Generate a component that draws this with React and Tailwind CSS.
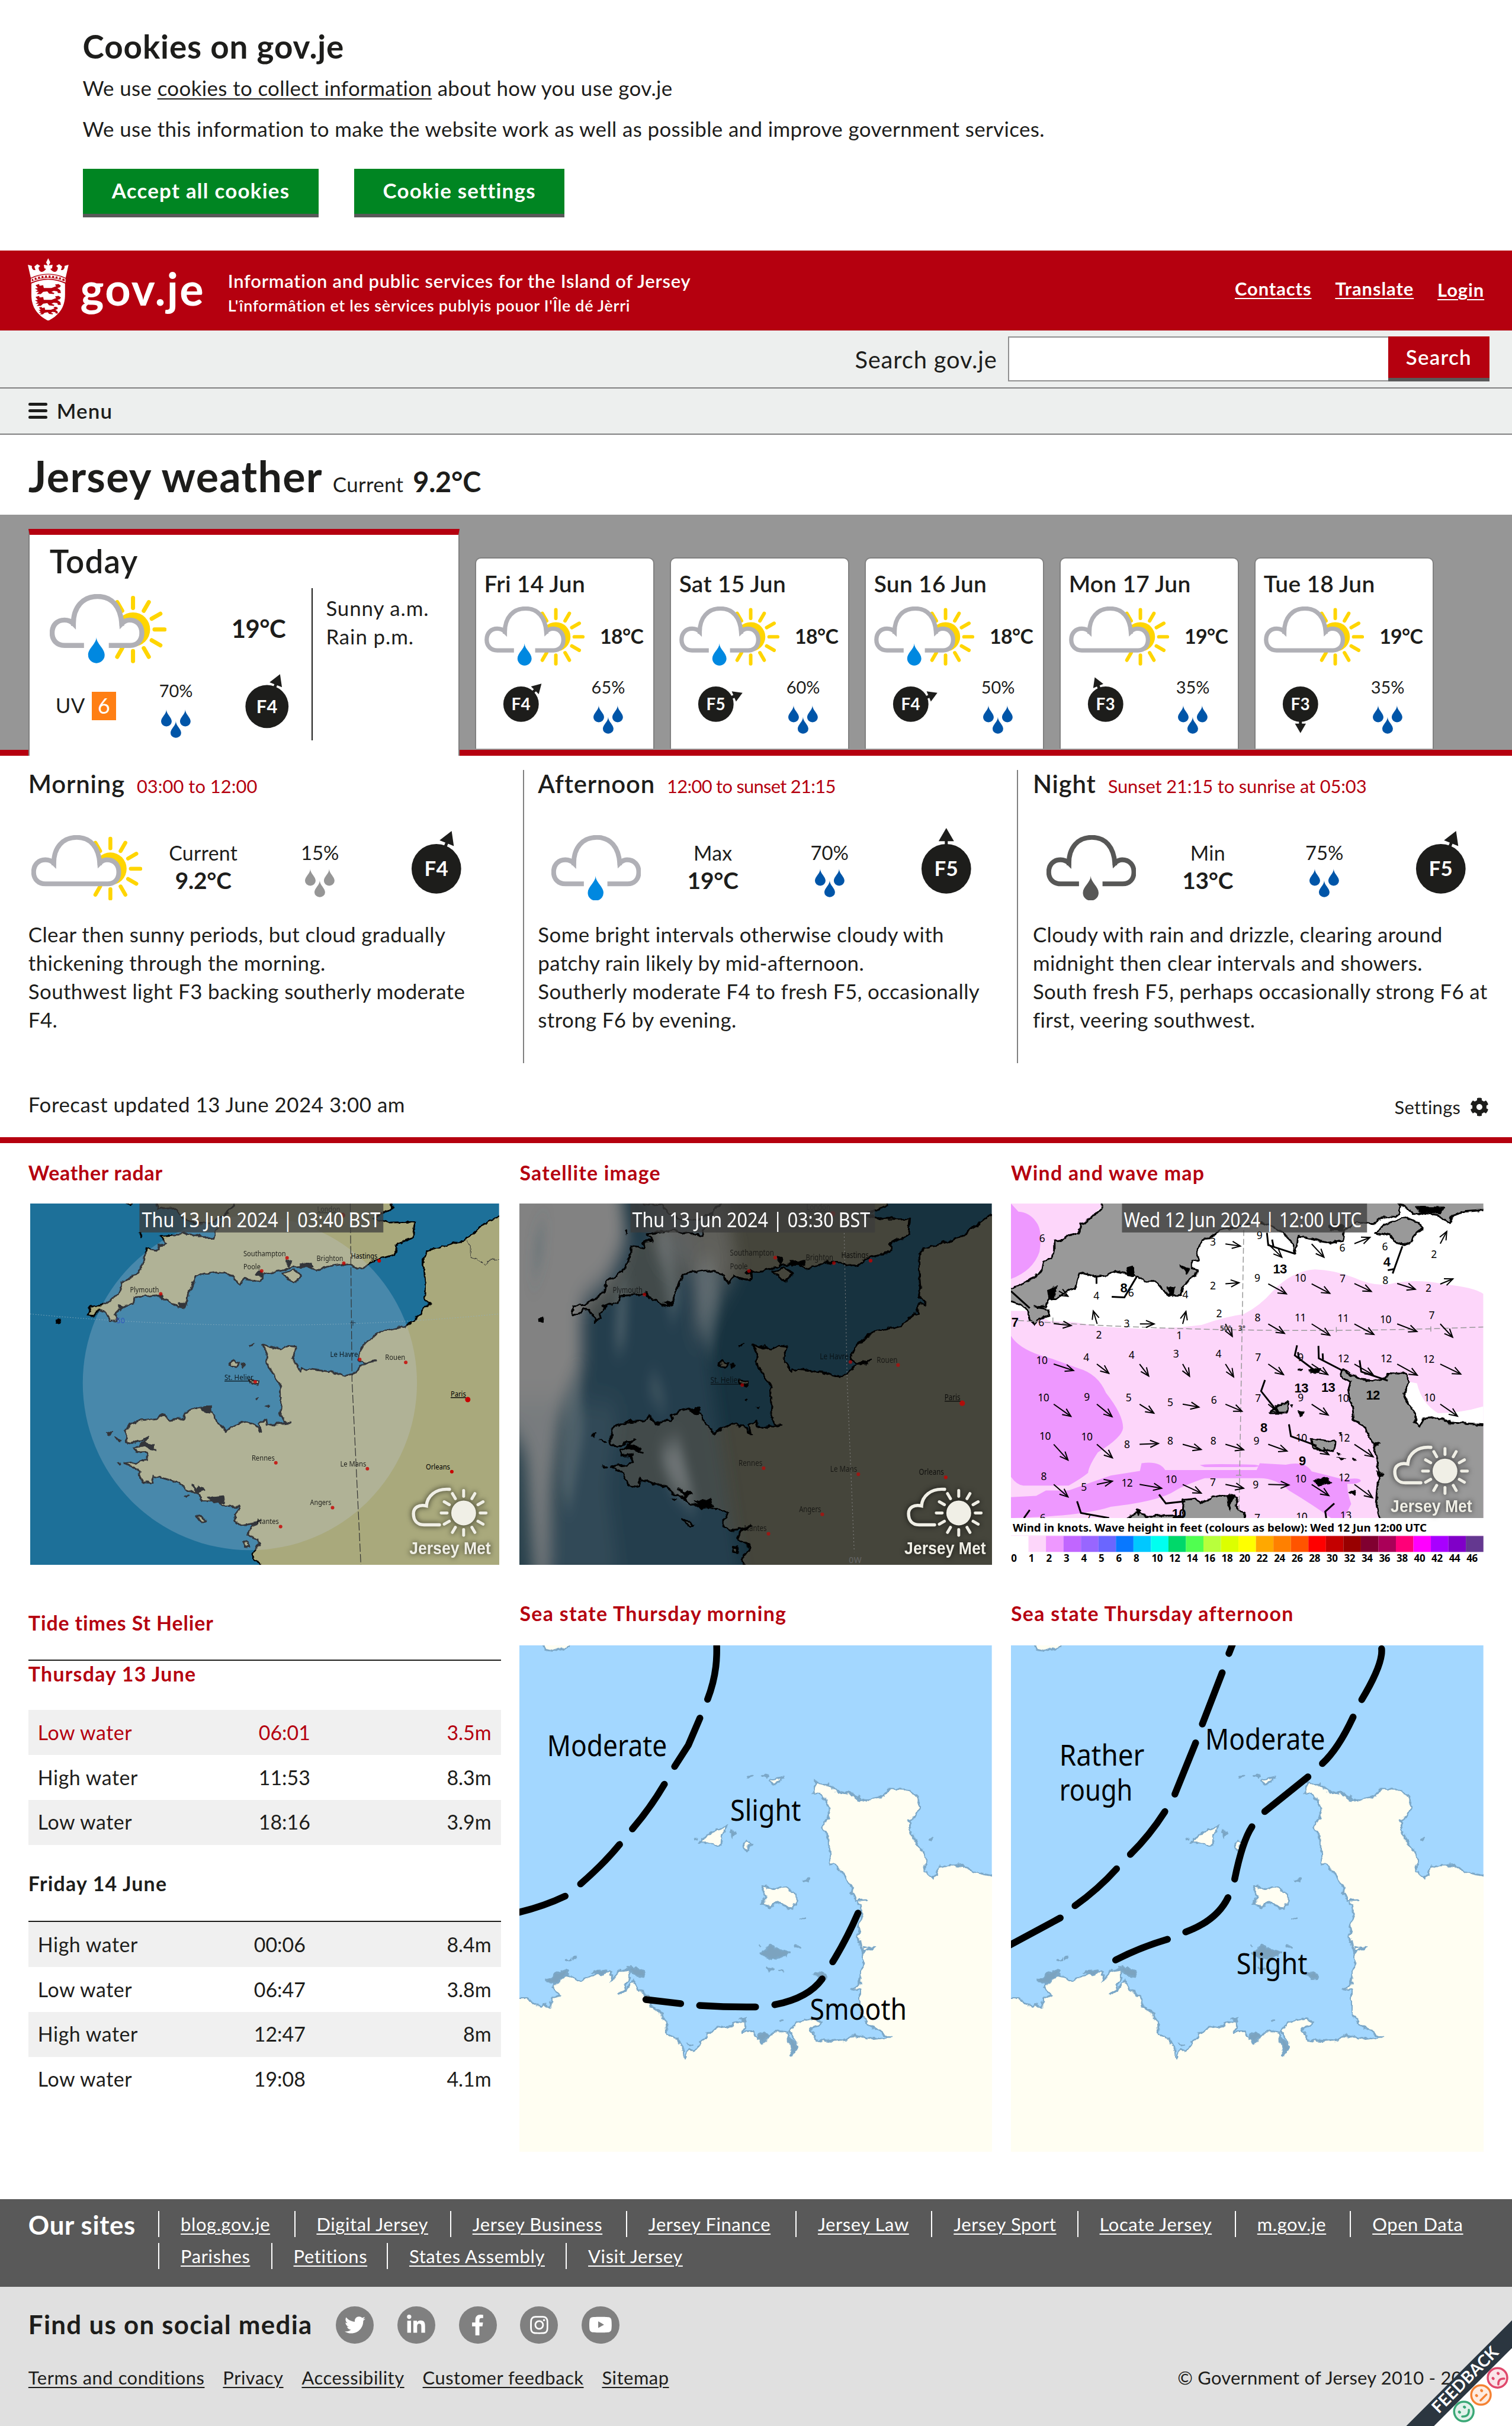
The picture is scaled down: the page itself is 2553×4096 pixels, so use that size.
import React from "react";
import { FaTwitter, FaLinkedinIn, FaFacebookF, FaInstagram, FaYoutube, FaCog } from "react-icons/fa";

const RAYS = [0, 30, 60, 90, 120, 150, 180, 210, 240, 270, 300, 330];
const CLOUD =
  "M25 87C12 87 4 78 4 66C4 52 13 44 25 44C31 44 36 46 40 50C40 22 56 4 81 4C106 4 120 22 122 50C126 46 130 44 135 44C148 44 156 53 156 66C156 79 148 87 136 87Z";

function WeatherIcon({ sun, rain, dark, className }) {
  const grey = dark ? "#575756" : "#b0b0b6";
  return (
    <svg viewBox={sun ? "0 0 198 117" : "0 0 160 117"} className={className} fill="none">
      {sun && (
        <g>
          <circle cx="141" cy="60" r="29" fill="#ffd500" />
          {RAYS.map((a) => (
            <line key={a} x1="141" y1="23.500" x2="141" y2="6.500" stroke="#ffd500" strokeWidth="7" strokeLinecap="round" transform={`rotate(${a} 141 60)`} />
          ))}
        </g>
      )}
      <path d={CLOUD} fill="#fff" stroke={grey} strokeWidth="8.500" />
      <path d="M40 46V54M122 46V54" stroke={grey} strokeWidth="8" />
      {rain && (
        <g>
          <rect x="58" y="80" width="42" height="14" fill="#fff" />
          <path d="M79 73C79 84 65 92 65 103A14 14 0 0 0 93 103C93 92 79 84 79 73Z" fill={dark ? "#575756" : "#0088e0"} />
        </g>
      )}
    </svg>
  );
}

function Drops({ light }) {
  const d = "M9 0C9 8 0 13 0 20A9 8.500 0 0 0 18 20C18 13 9 8 9 0Z";
  return (
    <svg viewBox="0 0 50 48" className="h-[48px] w-[50px] shrink-0" fill={light ? "#969696" : "#0055a8"}>
      <path d={d} />
      <path d={d} transform="translate(32 0)" />
      <path d={d} transform="translate(16 19.500)" />
    </svg>
  );
}

function Wind({ force, angle, className, size = 36.5, tip = 59, font = 28 }) {
  return (
    <svg viewBox="-70 -70 140 140" className={className}>
      <g transform={`rotate(${angle})`} fill="#1d1d1b">
        <rect x="-2.500" y={-(tip - 12)} width="5" height="20" />
        <path d={`M0 ${-tip}L${size * 0.31} ${-(tip - size * 0.53)}H${-size * 0.31}Z`} />
      </g>
      <circle r={size} fill="#1d1d1b" />
      <text y={font * 0.36} textAnchor="middle" fontSize={font} fill="#fff" className="font-[Lato] font-bold">
        {force}
      </text>
    </svg>
  );
}

function Crest() {
  return (
    <svg viewBox="0 0 69 106" className="h-[106px] w-[69px] shrink-0" fill="#fff">
      <path d="M34.500 0L38 7L35.500 12L42 11L41 17L38 18C44 26 50 24 51 16L48 13L53 10L58 14L56 20C61 21 63 16 62 13L69 11L64 33C46 24 23 24 5 33L0 11L7 13C6 16 8 21 13 20L11 14L16 10L21 13L18 16C19 24 25 26 31 18L28 17L27 11L33.500 12L31 7Z" />
      <path d="M6 35C24 26 45 26 63 35V40C45 32 24 32 6 40Z" fill="none" stroke="#fff" strokeWidth="1.500" />
      <path d="M9 36C24 29 45 29 60 36" fill="none" stroke="#fff" strokeWidth="3.500" strokeDasharray="3 3" />
      <path d="M6 43C24 34 45 34 63 43V62C63 84 52 97 34.500 106C17 97 6 84 6 62Z" />
      {[0, 20, 38].map((y, i) => (
        <g key={y} transform={`translate(${i === 2 ? 9 : 0} ${i === 2 ? 49 : y}) scale(${i === 2 ? 0.75 : 1} ${i === 2 ? 0.72 : 0.95})`}>
          <path
            d="M13 48L19 46L20 49L26 48L27 53L40 53L48 50L46 47L52 46L56 49L54 52L50 53L55 57L56 62L51 62L50 59L44 58L40 60L45 62L44 64L36 63L33 59L26 60L22 64L15 64L19 60L13 60L17 57L12 54L17 53Z"
            fill="#b5000f"
          />
        </g>
      ))}
    </svg>
  );
}

/* ---------- maps ---------- */

const ENGLAND =
  "730,180 690,240 668,290 660,318 625,318 590,303 495,312 515,342 490,345 484,365 450,358 445,400 432,435 405,465 375,485 370,515 345,545 310,570 278,572 272,605 290,605 305,585 325,592 342,630 360,620 355,600 375,575 408,560 415,538 490,530 520,552 550,575 568,575 580,545 590,500 602,460 640,452 680,443 715,458 740,490 755,470 800,480 812,455 865,442 900,425 940,420 975,440 1010,425 1060,415 1120,435 1150,405 1220,380 1222,350 1275,315 1280,260 1200,262 1150,245 1210,210 1205,180";
const WALES = "440,180 400,198 380,180 480,180 490,215 540,210 560,245 600,265 650,265 690,235 725,200 725,180";
const FRANCE =
  "1700,160 1541,240 1510,255 1435,325 1380,345 1320,370 1308,390 1308,440 1312,500 1310,550 1330,568 1308,570 1300,600 1250,645 1180,665 1120,710 1105,765 1120,780 1165,770 1115,790 1095,815 1065,828 1020,812 935,800 928,812 905,765 912,720 890,717 870,730 812,712 825,740 822,780 850,830 865,870 868,930 865,970 880,996 897,1000 850,1005 825,1012 822,985 798,1005 806,1032 780,1005 750,995 725,1010 700,1037 680,1010 655,965 640,940 600,950 570,962 565,985 520,992 508,970 485,985 440,990 400,1005 388,1030 388,1070 420,1075 460,1052 440,1075 478,1100 440,1085 415,1092 420,1112 450,1110 458,1138 385,1150 425,1170 440,1218 470,1220 475,1195 520,1210 560,1230 580,1250 610,1265 627,1290 670,1290 700,1310 740,1310 725,1340 725,1362 745,1380 808,1365 775,1380 765,1410 795,1430 800,1450 780,1480 785,1500 805,1524 820,1600 1700,1600";
const ISLETS = [
  "866,452 905,435 933,458 905,485",
  "705,790 722,770 738,780 730,793",
  "768,840 800,848 796,862 770,855",
  "606,1340 620,1345 636,1360 622,1366",
  "752,1440 765,1442 770,1460 758,1458",
];
const SPECKS = [
  "173,620 188,616 184,634 174,636", "766,712 784,708 772,720", "744,782 754,786 748,798", "788,912 798,908 792,918",
  "820,938 832,938 826,946", "330,1036 346,1028 340,1042", "354,1052 376,1064 370,1068", "364,1146 374,1152 366,1154",
  "568,1266 586,1270 576,1276", "428,302 434,300 436,318", "790,455 800,438 812,450 806,462", "925,415 965,412 970,428 925,430",
  "880,395 900,405 895,425", "640,1275 690,1270 695,1295 660,1300", "590,1230 605,1245 615,1235 630,1250 605,1262",
  "440,1070 475,1080 470,1095 430,1085", "620,940 655,938 645,965 625,955", "545,560 572,560 560,578", "365,570 380,572 370,590",
  "486,530 500,522 502,545",
];

function CoastFilter({ id, scale = 9 }) {
  return (
    <filter id={id} x="-5%" y="-5%" width="110%" height="110%">
      <feTurbulence type="fractalNoise" baseFrequency="0.07" numOctaves="3" seed="4" result="n" />
      <feDisplacementMap in="SourceGraphic" in2="n" scale={scale} xChannelSelector="R" yChannelSelector="G" />
    </filter>
  );
}

function Channel({ fill, stroke = "#000", width = 2.8 }) {
  return (
    <g fill={fill} stroke={stroke} strokeWidth={width} strokeLinejoin="round">
      {[ENGLAND, WALES, FRANCE, ...ISLETS].map((p, i) => (
        <polygon key={i} points={p} vectorEffect="non-scaling-stroke" />
      ))}
      {stroke !== "none" && (
        <g fill="#000" strokeWidth="1.500">
          {SPECKS.map((p, i) => (
            <polygon key={i} points={p} vectorEffect="non-scaling-stroke" />
          ))}
        </g>
      )}
    </g>
  );
}

function MetLogo({ x, y }) {
  return (
    <g transform={`translate(${x} ${y})`} className="[filter:drop-shadow(0_0_5px_rgba(0,0,0,0.75))]">
      <circle r="21" fill="#f0efe6" />
      {RAYS.map((a) => (
        <line key={a} y1="-28" y2="-38" stroke="#f0efe6" strokeWidth="5" strokeLinecap="round" transform={`rotate(${a})`} />
      ))}
      <path d="M-41 20H-67C-80 20 -85 11 -85 1C-85 -9 -76 -15 -63 -12C-62 -28 -48 -42 -24 -40" fill="none" stroke="#f0efe6" strokeWidth="5.500" strokeLinecap="round" />
      <text x="-92" y="70" fontSize="29" fill="#f0efe6" textLength="138" lengthAdjust="spacingAndGlyphs" className="font-['Liberation_Sans'] font-bold tracking-normal">
        Jersey Met
      </text>
    </g>
  );
}

function Stamp({ x, w, tx, tw, children }) {
  return (
    <g>
      <rect x={x} y="0" width={w} height="49" fill="#3c3c3c" fillOpacity="0.75" />
      <text x={tx} y="40" fontSize="34" fill="#fff" textLength={tw} lengthAdjust="spacingAndGlyphs" className="font-['Noto_Sans'] tracking-normal">
        {children}
      </text>
    </g>
  );
}

/* city: name, label start, label end, baseline, dot x, dot y, opacity, underlined */
const CITIES = [
  ["London", 486, 525, 14, 529, 20, 0.8, 1],
  ["Southampton", 361, 433, 89, 435, 92, 0.8],
  ["Poole", 361, 390, 111, 392, 114, 0.8],
  ["Brighton", 485, 530, 97, 531, 101, 0.8],
  ["Hastings", 543, 588, 93, 591, 97, 1],
  ["Plymouth", 169, 218, 150, 221, 153, 0.8],
  ["Le Havre", 508, 555, 260, 558, 264, 0.8],
  ["Rouen", 601, 635, 265, 636, 269, 0.8],
  ["St. Helier", 329, 378, 299, 381, 302, 0.8, 1],
  ["Paris", 712, 738, 327, 741, 332, 1, 1],
  ["Rennes", 375, 414, 435, 416, 439, 0.8],
  ["Le Mans", 525, 569, 445, 571, 449, 0.8],
  ["Orleans", 670, 711, 450, 714, 454, 1],
  ["Angers", 474, 510, 511, 512, 515, 0.8],
  ["Nantes", 384, 421, 543, 424, 547, 0.8],
];

function Cities() {
  return (
    <g className="font-['Noto_Sans'] tracking-normal">
      {CITIES.map(([n, a, b, y, dx, dy, o, u]) => (
        <g key={n} opacity={o}>
          <circle cx={dx} cy={dy} r={n === "Paris" || n === "London" ? 4.5 : 3} fill="#c80000" />
          <text x={a} y={y} fontSize="13.500" fill="#000" textLength={b - a} lengthAdjust="spacingAndGlyphs" textDecoration={u ? "underline" : "none"}>
            {n}
          </text>
        </g>
      ))}
    </g>
  );
}

function RadarMap() {
  return (
    <svg viewBox="0 0 794 612" className="ml-[3px] h-[612px] w-[794px]">
      <defs>
        <CoastFilter id="coastA" />
      </defs>
      <rect width="794" height="612" fill="#1d7099" />
      <g filter="url(#coastA)">
        <g transform="scale(0.5485 0.4592) translate(-93 -192)">
          <Channel fill="#a9a97c" />
          <path d="M1440 325L1452 350V390L1475 395L1495 418L1520 392L1560 410" fill="none" stroke="#333" vectorEffect="non-scaling-stroke" />
        </g>
      </g>
      <circle cx="372" cy="304" r="283" fill="#c6cde0" fillOpacity="0.26" />
      <path d="M542 0L545 300L560 612" fill="none" stroke="#333" strokeWidth="1.200" strokeDasharray="14 4" />
      <path d="M0 187Q400 225 794 187" fill="none" stroke="#8fb0c0" strokeWidth="1" strokeDasharray="1.500 3" />
      <path d="M542 202h9M546.500 198v9" stroke="#234" />
      <text x="146" y="203" fontSize="12" fill="#2f55c0" className="font-['Noto_Sans']">50</text>
      <Cities />
      <Stamp x={185} w={413} tx={189} tw={404}>Thu 13 Jun 2024 | 03:40 BST</Stamp>
      <MetLogo x={734} y={524} />
    </svg>
  );
}

function SatelliteMap() {
  return (
    <svg viewBox="0 0 800 612" className="h-[612px] w-[800px]">
      <defs>
        <CoastFilter id="coastB" scale={11} />
        <filter id="cloudBlur" x="-50%" y="-50%" width="200%" height="200%">
          <feGaussianBlur stdDeviation="13 22" />
        </filter>
        <filter id="wisp" x="-50%" y="-50%" width="200%" height="200%">
          <feGaussianBlur stdDeviation="8 18" />
        </filter>
      </defs>
      <rect width="800" height="612" fill="#17323f" />
      <g filter="url(#coastB)">
        <g transform="scale(0.542 0.4592) translate(-37 -192) matrix(1.0484 0 0 1.0277 -84.400 -19.700)">
          <Channel fill="#45453a" stroke="none" />
        </g>
      </g>
      <g filter="url(#cloudBlur)">
        <path d="M90 60L290 40L340 400L380 660H40L100 300Z" fill="#3d5566" fillOpacity="0.35" />
        <path d="M-60 -60H170L182 60L150 130L105 170V280L70 360L55 480L48 680H30L10 420L-60 330Z" fill="#828282" />
        <path d="M200 -30L345 -20L370 110L330 180L300 240L290 120L240 90Z" fill="#777" fillOpacity="0.5" />
        <path d="M-40 330H110L170 340L150 480L170 640H-40Z" fill="#5a6a74" fillOpacity="0.25" />
      </g>
      <g filter="url(#wisp)" fill="#8a8f93" fillOpacity="0.32">
        <path d="M228 50L250 40L275 160L258 200Z" />
        <path d="M300 100L330 90L340 170L325 260L305 210Z" />
        <path d="M215 310L230 290L250 340L245 350Z" />
        <path d="M25 60L45 20L40 90L22 140Z" fill="#45606c" />
        <path d="M75 340L100 280L110 380L85 520L70 480Z" />
        <path d="M165 150L185 120L180 240L160 250Z" />
        <path d="M235 420L270 400L300 520L260 480Z" fillOpacity="0.6" />
      </g>
      <g filter="url(#coastB)">
        <g transform="scale(0.542 0.4592) translate(-37 -192) matrix(1.0484 0 0 1.0277 -84.400 -19.700)">
          <Channel fill="none" width={3.2} />
        </g>
      </g>
      <path d="M550 50L555 300L567 590" fill="none" stroke="#888" strokeWidth="1" strokeDasharray="2 4" />
      <text x="558" y="609" fontSize="14" fill="#666" className="font-['Noto_Sans']">0W</text>
      <g transform="matrix(1.035 0 0 1.0277 -17 -3)" opacity="0.8">
        <Cities />
      </g>
      <Stamp x={188} w={414} tx={191} tw={403}>Thu 13 Jun 2024 | 03:30 BST</Stamp>
      <MetLogo x={744} y={524} />
    </svg>
  );
}

/* arrows: tail x, tail y, head x, head y */
const ARROWS = [
  [684, 341, 730, 349], [816, 341, 858, 390], [950, 341, 988, 390], [1082, 340, 1130, 317], [1347, 340, 1367, 295],
  [684, 488, 726, 484], [816, 488, 872, 525], [950, 488, 1006, 523], [1082, 487, 1134, 516], [1214, 487, 1270, 508], [1347, 489, 1386, 470],
  [154, 635, 208, 642], [288, 636, 276, 588], [420, 636, 464, 636], [552, 636, 562, 590], [684, 636, 705, 682], [816, 636, 866, 671],
  [950, 636, 1006, 678], [1082, 636, 1142, 675], [1214, 636, 1275, 664], [1347, 636, 1385, 685],
  [154, 784, 215, 808], [287, 784, 324, 818], [419, 784, 447, 828], [552, 784, 573, 829], [684, 784, 709, 831], [816, 784, 863, 823],
  [950, 784, 1000, 823], [1082, 784, 1140, 824], [1214, 784, 1276, 825], [1347, 784, 1410, 821],
  [154, 932, 207, 977], [287, 932, 334, 978], [419, 932, 463, 965], [552, 932, 602, 943], [684, 932, 735, 958], [816, 932, 850, 965],
  [950, 932, 1001, 972], [1347, 932, 1400, 976],
  [154, 1080, 198, 1138], [287, 1080, 335, 1130], [419, 1080, 477, 1077], [552, 1080, 609, 1099], [684, 1080, 740, 1100], [816, 1080, 874, 1105],
  [950, 1080, 1003, 1118], [1082, 1080, 1140, 1126],
  [154, 1228, 198, 1274], [287, 1228, 335, 1216], [419, 1228, 487, 1242], [552, 1228, 609, 1260], [684, 1228, 740, 1242], [816, 1228, 880, 1230],
  [950, 1228, 1003, 1269], [1082, 1228, 1138, 1277], [170, 515, 198, 534],
];
const NUMS = [
  [6, 118, 333], [3, 645, 346], [9, 789, 322], [6, 1044, 369], [6, 1176, 364], [2, 1327, 392], [4, 285, 545], [6, 392, 534], [2, 645, 508],
  [4, 560, 542], [9, 782, 481], [10, 915, 481], [7, 1045, 483], [8, 1177, 490], [2, 1310, 518], [6, 115, 645], [3, 379, 648], [2, 664, 612],
  [8, 783, 627], [11, 915, 627], [11, 1047, 629], [10, 1178, 634], [7, 1320, 619], [2, 293, 690], [1, 541, 692], [10, 117, 784], [4, 254, 773],
  [4, 394, 764], [3, 531, 760], [4, 662, 760], [7, 784, 772], [9, 916, 772], [12, 1048, 778], [12, 1180, 778], [12, 1311, 780], [10, 122, 921],
  [9, 256, 919], [5, 385, 922], [5, 513, 938], [6, 648, 930], [7, 784, 923], [9, 916, 921], [10, 1047, 924], [10, 1314, 922], [10, 127, 1063],
  [10, 256, 1065], [8, 380, 1095], [8, 513, 1082], [8, 646, 1082], [9, 779, 1080], [10, 918, 1070], [12, 1050, 1070], [8, 123, 1213], [5, 247, 1252],
  [12, 380, 1235], [10, 516, 1224], [7, 645, 1233], [9, 777, 1242], [10, 916, 1220], [12, 1050, 1217], [6, 120, 1365], [7, 260, 1365], [7, 782, 1365],
  [10, 919, 1360], [13, 1055, 1357],
];
const BOLD_NUMS = [
  [13, 852, 450], [4, 1182, 423], [8, 370, 520], [7, 34, 647], [13, 918, 889], [13, 1001, 886], [12, 1139, 915], [8, 802, 1036], [9, 921, 1157], [10, 540, 1352],
];
const BARBS = [
  "812,300 816,345 900,378", "828,325 832,350", "1230,350 1200,450", "1203,434 1185,438", "410,462 372,538 333,536", "22,515 80,578",
  "905,715 898,752 960,808", "908,740 910,762", "971,717 972,763 1045,808", "984,745 985,768", "1098,770 1103,812 1185,845", "806,843 794,884 850,968",
  "880,1006 886,1050 965,1085", "479,1265 500,1298 560,1290", "226,1290 238,1333 325,1352", "80,1322 62,1352", "1020,1298 992,1328 995,1352", "286,462 286,488",
];
const SCALE = [
  ["0", "#ffffff"], ["1", "#fdd6fa"], ["2", "#ee98ff"], ["3", "#c166ff"], ["4", "#9866ff"], ["5", "#6a66ff"], ["6", "#0878ff"], ["8", "#00c8ff"],
  ["10", "#00fff0"], ["12", "#00d86a"], ["14", "#50ff50"], ["16", "#b8ff3c"], ["18", "#dcff00"], ["20", "#ffff00"], ["22", "#ffa800"], ["24", "#ff8000"],
  ["26", "#ff5400"], ["28", "#ff0000"], ["30", "#c40000"], ["32", "#980000"], ["34", "#800030"], ["36", "#aa0058"], ["38", "#ff0078"], ["40", "#ff00ff"],
  ["42", "#a800ff"], ["44", "#8000c8"], ["46", "#643890"],
];
const WIND_LAND = [
  "300,150 300,210 265,250 235,270 232,300 200,310 185,325 155,330 155,360 150,395 120,405 115,435 95,465 50,490 10,515 10,550 50,565 75,590 80,625 95,642 105,620 135,605 138,580 95,572 130,570 140,545 160,545 195,515 220,505 230,455 250,450 280,460 320,455 345,440 385,450 415,460 435,480 470,480 490,510 510,530 545,530 555,490 590,460 598,435 580,430 580,405 602,400 595,370 620,320 640,318 665,290 740,275 790,262 830,275 860,300 890,335 900,378 908,315 940,318 1010,340 1045,330 1050,290 1090,262 1140,268 1160,250 1220,230 1225,205 1200,150",
  "1145,298 1175,270 1235,242 1275,260 1293,285 1265,310 1260,335 1230,347 1190,310",
  "1205,180 1240,205 1265,232 1290,225 1340,235 1375,264 1385,235 1420,222 1500,215 1500,150",
  "1040,830 1045,805 1100,840 1140,845 1175,838 1185,818 1240,820 1252,850 1235,890 1240,910 1270,970 1270,1000 1285,1017 1295,985 1340,980 1375,1000 1500,1007 1500,1380 1165,1380 1150,1300 1158,1180 1140,1080 1110,1010 1080,990 1075,930 1060,890 1072,850",
  "550,1380 555,1285 590,1280 610,1297 640,1275 700,1262 720,1275 715,1310 745,1330 745,1380",
  "370,1360 410,1330 440,1345 540,1342 560,1380",
  "820,965 828,950 878,922 872,965",
  "950,1060 1020,1070 1018,1105 955,1095",
];
const WIND_SPECKS = [
  "910,805 922,803 918,808", "945,803 975,800 970,815 950,818", "885,938 895,936 892,948", "908,955 925,962 915,978", "955,1212 1000,1205 1010,1222 970,1232",
  "1065,1255 1085,1250 1080,1270", "1030,1110 1040,1112 1035,1120", "1028,1130 1055,1133 1040,1138", "1078,1133 1088,1138 1082,1142", "1035,1040 1045,1042 1040,1050",
  "1270,205 1360,205 1350,228 1280,222", "1003,275 1050,270 1045,292 1010,290", "380,430 395,425 400,460 385,455", "505,500 525,500 520,535", "135,510 160,500 150,550 140,545",
  "545,420 575,435 565,455", "410,1320 425,1325 415,1345", "1140,1075 1160,1078 1145,1085", "1150,1180 1172,1190 1155,1200", "690,1265 712,1262 695,1325",
];

function WindMap() {
  const sx = (v) => (v - 22) / 1.8225;
  const sy = (v) => (v - 192) / 2.1778;
  return (
    <svg viewBox="0 0 800 612" className="h-[612px] w-[800px] font-['Noto_Sans'] tracking-normal">
      <defs>
        <CoastFilter id="coastC" scale={8} />
        <clipPath id="windClip">
          <rect width="800" height="532.500" />
        </clipPath>
      </defs>
      <rect width="800" height="612" fill="#fff" />
      <g clipPath="url(#windClip)">
        <g transform="scale(0.5487 0.4592) translate(-22 -192)">
          <path d="M22 192H310L150 400L22 530Z" fill="#fdd6fa" />
          <path d="M22 588H80L140 625L220 630L290 645L440 655L550 648L610 640Q680 610 740 600Q790 570 830 515Q890 440 960 435Q1020 437 1080 465Q1150 505 1210 484Q1280 470 1360 490Q1450 500 1480 525V1352H22Z" fill="#fdd6fa" />
          <path d="M1230 845L1275 855Q1290 930 1340 965Q1410 965 1480 940V1010L1260 1010Z" fill="#fff" />
          <path d="M22 192L45 222Q80 225 100 260Q120 290 110 370Q90 440 22 470Z" fill="#ee98ff" />
          <path d="M22 680Q50 735 150 765L230 800Q290 820 315 890Q368 970 368 1020Q365 1055 290 1110Q262 1160 260 1185Q240 1205 200 1232H60Q40 1230 22 1200Z" fill="#ee98ff" />
          <path d="M22 1275L100 1270L130 1250L200 1250L270 1220L330 1195L420 1178L425 1150Q480 1140 498 1175H780L790 1150L870 1155Q930 1140 950 1180L1050 1210Q1100 1200 1102 1215Q1090 1228 1060 1225Q1060 1260 1072 1300L1050 1352H1010Q950 1300 880 1250Q840 1205 790 1205H620Q560 1230 530 1250Q480 1290 330 1310Q240 1345 22 1352Z" fill="#ee98ff" />
          <path d="M605 1157Q620 1150 775 1155Q800 1160 775 1164H620Z" fill="#ee98ff" />
        </g>
        <g filter="url(#coastC)">
          <g transform="scale(0.5487 0.4592) translate(-22 -192)" fill="#999" stroke="#000" strokeWidth="3" strokeLinejoin="round">
            {WIND_LAND.map((p, i) => (
              <polygon key={i} points={p} vectorEffect="non-scaling-stroke" />
            ))}
            {WIND_SPECKS.map((p, i) => (
              <polygon key={i} points={p} vectorEffect="non-scaling-stroke" fill="#000" strokeWidth="1.500" />
            ))}
          </g>
        </g>
        <path d="M395 0L386 532M12 198Q400 225 800 209" fill="none" stroke="#999" strokeWidth="1.500" strokeDasharray="10 5" />
        <path d="M71 193v9M551 209v9M711 208v9M381 460h9" stroke="#999" strokeWidth="1.500" />
        <g fill="none" stroke="#000" strokeWidth="2">
          {ARROWS.map((a, i) => {
            const [x1, y1, x2, y2] = [sx(a[0]), sy(a[1]), sx(a[2]), sy(a[3])];
            const deg = (Math.atan2(y2 - y1, x2 - x1) * 180) / Math.PI;
            return (
              <g key={i}>
                <path d={`M${x1} ${y1}L${x2} ${y2}`} />
                <path d="M-14 -6L0 0L-14 6" transform={`translate(${x2} ${y2}) rotate(${deg})`} />
              </g>
            );
          })}
        </g>
        <g fill="none" stroke="#000" strokeWidth="3">
          {BARBS.map((b, i) => (
            <polyline key={i} points={b.split(" ").map((q) => { const [x, y] = q.split(","); return `${sx(+x)},${sy(+y)}`; }).join(" ")} />
          ))}
        </g>
        <g fontSize="17.500" textAnchor="middle" letterSpacing="-0.500">
          {NUMS.map(([n, x, y], i) => (
            <text key={i} x={sx(x)} y={sy(y)}>{n}</text>
          ))}
        </g>
        <g fontSize="22" textAnchor="middle" letterSpacing="-0.500" className="font-['Liberation_Sans'] font-bold">
          {BOLD_NUMS.map(([n, x, y], i) => (
            <text key={i} x={sx(x)} y={sy(y)}>{n}</text>
          ))}
        </g>
        <text x="354" y="216" fontSize="12" fill="#444" className="font-bold">50°</text>
        <text x="385" y="216" fontSize="12" fill="#444" className="font-bold">3°</text>
      </g>
      <Stamp x={188} w={415} tx={191} tw={403}>Wed 12 Jun 2024 | 12:00 UTC</Stamp>
      <MetLogo x={735} y={453} />
      <text x="3" y="556" fontSize="18" textLength="701" lengthAdjust="spacingAndGlyphs" className="font-bold">
        Wind in knots. Wave height in feet (colours as below): Wed 12 Jun 12:00 UTC
      </text>
      <path d="M0 562.500H800" stroke="#fdd6fa" />
      {SCALE.map(([n, c], i) => (
        <g key={n}>
          <rect x={i * 29.63} y="563" width="29.700" height="27" fill={c} />
          <text x={i * 29.63 + 5 + (n.length > 1 ? 5.5 : 0)} y="607" fontSize="17" letterSpacing="-0.300" textAnchor="middle" className="font-bold">{n}</text>
        </g>
      ))}
    </svg>
  );
}

const SEA_LAND =
  "20,1125 60,1125 85,1138 105,1152 115,1140 135,1150 138,1125 165,1115 140,1095 160,1065 200,1065 225,1078 280,1060 325,1055 320,1078 345,1052 385,1045 375,1080 350,1117 390,1080 410,1105 440,1118 447,1145 475,1162 492,1185 495,1220 540,1245 553,1290 565,1262 583,1268 625,1220 660,1205 700,1200 745,1185 735,1215 765,1215 795,1252 810,1225 850,1215 875,1218 890,1280 903,1245 880,1215 905,1188 960,1180 978,1190 950,1210 965,1238 1010,1242 1060,1238 1085,1225 1130,1235 1195,1230 1165,1215 1125,1195 1100,1155 1100,1105 1080,1100 1100,1085 1110,1040 1108,985 1145,990 1105,1000 1093,960 1105,905 1100,860 1125,860 1090,862 1068,820 1040,780 1008,760 1002,690 980,660 1002,640 1000,590 958,568 960,535 985,548 1002,545 1020,562 1070,572 1110,592 1165,582 1195,558 1240,560 1275,572 1290,605 1275,630 1255,645 1252,665 1308,745 1302,780 1330,800 1350,768 1415,764 1450,782 1530,797 1530,1560 20,1560";
const SEA_ISLES = [
  "603,705 620,685 690,657 670,685 668,710 640,706", "793,822 830,830 850,823 895,835 903,855 895,882 870,880 845,863 820,880 795,870 805,850",
  "818,535 865,527 850,535 825,550", "100,160 120,180 155,185 190,175 200,160", "738,708 748,700 765,708 752,718 742,728",
];
const SEA_ROCKS = [
  "750,526 768,525 758,529", "795,522 815,520 805,526", "585,694 592,696", "698,672 715,680 705,690", "926,806 945,802 938,811", "918,912 930,912",
  "790,1005 820,985 850,995 880,1003 870,1012 825,1020", "812,1045 830,1047 820,1049", "850,1051 860,1052", "900,983 912,985", "958,1060 985,1055 1000,1070 970,1072", "1318,695 1328,691 1322,699",
  "180,1022 198,1019", "208,1016 216,1014", "122,1078 165,1052 195,1055 150,1085", "265,1055 310,1050 300,1062", "380,1040 430,1052 425,1068 395,1062", "784,985 790,988",
  "780,1240 800,1215 815,1225 800,1245", "875,1230 890,1240 905,1252 895,1275", "730,1180 745,1178 740,1190", "560,1250 575,1248", "852,1190 858,1190",
];

function SeaMap({ id, lines, labels }) {
  return (
    <svg viewBox="0 0 800 857" className="h-[857.500px] w-[800px]" preserveAspectRatio="none">
      <defs>
        <CoastFilter id={id} scale={12} />
      </defs>
      <rect width="800" height="857" fill="#a3d7ff" />
      <g filter={`url(#${id})`}>
        <g transform="scale(0.542 0.625) translate(-37 -170)" fill="#fffef2" stroke="#7ba8c8" strokeWidth="3" strokeLinejoin="round">
          {[SEA_LAND, ...SEA_ISLES].map((p, i) => (
            <polygon key={i} points={p} vectorEffect="non-scaling-stroke" />
          ))}
          {SEA_ROCKS.map((p, i) => (
            <polygon key={i} points={p} vectorEffect="non-scaling-stroke" fill="#7ba3bf" />
          ))}
        </g>
      </g>
      <g fill="none" stroke="#000" strokeWidth="11.500" strokeLinecap="round">
        {lines.map((d) => (
          <path key={d} d={d} vectorEffect="non-scaling-stroke" transform="scale(0.542 0.625) translate(-37 -170)" />
        ))}
      </g>
      <g fontSize="49" fill="#000" className="font-['Noto_Sans'] tracking-normal">
        {labels.map(([t, x, y, w]) => (
          <text key={t} x={x} y={y} textLength={w} lengthAdjust="spacingAndGlyphs">{t}</text>
        ))}
      </g>
    </svg>
  );
}

const MORNING_LINES = [
  "M653 160C655 200 654 250 625 316", "M601 367L565 440L522 498", "M490 546Q445 612 390 667", "M350 709Q300 762 228 816", "M180 849Q110 878 25 895",
  "M432 1129L541 1140", "M600 1145Q690 1150 775 1149", "M835 1143Q940 1125 983 1073", "M1095 895Q1060 965 1016 1027",
];
const AFTERNOON_LINES = [
  "M737 150L718 192", "M697 244L635 383", "M614 434L549 573", "M518 620Q470 685 410 736", "M367 775Q310 830 237 875", "M191 908L20 988",
  "M1195 179Q1200 220 1133 317", "M1106 364Q1060 450 1010 490", "M965 526L830 620", "M790 661Q760 700 736 803", "M715 853Q680 915 583 946", "M526 966Q440 988 364 1022",
];

/* ---------- page ---------- */

const DAYS = [
  { day: "Fri 14 Jun", temp: "18°C", rain: "65%", wind: "F4", angle: 45, wet: true },
  { day: "Sat 15 Jun", temp: "18°C", rain: "60%", wind: "F5", angle: 67, wet: true },
  { day: "Sun 16 Jun", temp: "18°C", rain: "50%", wind: "F4", angle: 67, wet: true },
  { day: "Mon 17 Jun", temp: "19°C", rain: "35%", wind: "F3", angle: -22 },
  { day: "Tue 18 Jun", temp: "19°C", rain: "35%", wind: "F3", angle: 180 },
];

const PERIODS = [
  {
    name: "Morning", time: "03:00 to 12:00", track: "tracking-[0.001em]", label: "Current", temp: "9.2°C", rain: "15%", light: true, wind: "F4", angle: 22,
    icon: { sun: true }, pad: "pl-[48px] w-[888px] border-r-[2.1px]",
    text: ["Clear then sunny periods, but cloud gradually", "thickening through the morning.", "Southwest light F3 backing southerly moderate", "F4."],
  },
  {
    name: "Afternoon", time: "12:00 to sunset 21:15", track: "tracking-[-0.023em]", label: "Max", temp: "19°C", rain: "70%", wind: "F5", angle: 0,
    icon: { rain: true }, pad: "pl-[23px] w-[836px] border-r-[2.1px]",
    text: ["Some bright intervals otherwise cloudy with", "patchy rain likely by mid-afternoon.", "Southerly moderate F4 to fresh F5, occasionally", "strong F6 by evening."],
  },
  {
    name: "Night", time: "Sunset 21:15 to sunrise at 05:03", track: "tracking-[-0.004em]", label: "Min", temp: "13°C", rain: "75%", wind: "F5", angle: 22,
    icon: { rain: true, dark: true }, pad: "pl-[25px] w-[836px]",
    text: ["Cloudy with rain and drizzle, clearing around", "midnight then clear intervals and showers.", "South fresh F5, perhaps occasionally strong F6 at", "first, veering southwest."],
  },
];

const SITES_A = [
  ["blog.gov.je", "w-[230px]"], ["Digital Jersey", "w-[264px]"], ["Jersey Business", "w-[298px]"], ["Jersey Finance", "w-[287px]"], ["Jersey Law", "w-[230px]"],
  ["Jersey Sport", "w-[247px]"], ["Locate Jersey", "w-[267px]"], ["m.gov.je", "w-[195px]"], ["Open Data", "w-[230px]"],
];
const SITES_B = [["Parishes", "w-[191px]"], ["Petitions", "w-[196px]"], ["States Assembly", "w-[303px]"], ["Visit Jersey", "w-[230px]"]];

const LINK = "underline decoration-[2.1px] underline-offset-4";

function SiteRow({ items }) {
  return (
    <ul className="flex">
      {items.map(([t, w]) => (
        <li key={t} className={`${w} h-[44px] border-l-[2.1px] border-white pl-[36px] leading-[46px] whitespace-nowrap`}>
          <a className={LINK}>{t}</a>
        </li>
      ))}
    </ul>
  );
}

function TideRows({ rows, col }) {
  return (
    <div className="text-[34px] tracking-[0.016em]">
      {rows.map(([a, b, c, hot], i) => (
        <div key={b} className={`flex h-[76px] items-center px-[16px] ${i % 2 ? "" : "bg-[#f0f0f0]"} ${hot ? "text-[#b5000f]" : ""}`}>
          <span className={col}>{a}</span>
          <span className="flex-1 tracking-normal">{b}</span>
          <span className="tracking-normal">{c}</span>
        </div>
      ))}
    </div>
  );
}

function Face({ x, y, color, mouth }) {
  return (
    <g transform={`translate(${x} ${y}) rotate(-45)`} fill="none" stroke={color} strokeWidth="3.500" strokeLinecap="round">
      <circle r="16.500" fill={color} fillOpacity="0.15" />
      <path d={mouth} />
      <path d="M-6 -5v1M6 -5v1" strokeWidth="4.500" />
    </g>
  );
}

const MEDIA_TITLE = "h-[48px] text-[34px] leading-[48px] font-bold text-[#b5000f]";
const COOKIE_BUTTON = "h-[82px] border-b-[6.1px] border-[#595959] bg-[#008522] pb-[1px] tracking-[0.036em]";

export default function App() {
  return (
    <div className="relative flex h-[4108px] w-full flex-col overflow-hidden bg-white font-[Lato,sans-serif] tracking-[0.32px] text-[#1d1d1b] [zoom:0.99708]">
      <section className="h-[424px] shrink-0 pl-[140px] pt-[47px]">
        <h2 className="text-[55px] leading-[64px] font-bold tracking-[0.016em]">Cookies on gov.je</h2>
        <p className="mt-[14px] text-[35px] leading-[48px] tracking-[0.011em]">
          We use <a className={LINK}>cookies to collect information</a> about how you use gov.je
        </p>
        <p className="mt-[22px] text-[35px] leading-[48px] tracking-[0.011em]">
          We use this information to make the website work as well as possible and improve government services.
        </p>
        <div className="mt-[43px] flex gap-[60px] text-[35px] font-bold text-white">
          <button className={`w-[400px] ${COOKIE_BUTTON}`}>Accept all cookies</button>
          <button className={`w-[356px] ${COOKIE_BUTTON}`}>Cookie settings</button>
        </div>
      </section>

      <header className="flex h-[136px] shrink-0 bg-[#b5000f] pl-[47px] text-white">
        <div className="pt-[13px]"><Crest /></div>
        <div className="ml-[20px] w-[250px] pt-[20px] text-[76px] leading-[88px] font-bold tracking-[0.03em]">gov.je</div>
        <div className="pt-[31px] font-semibold whitespace-nowrap">
          <div className="text-[31px] leading-[42px] tracking-[0.024em]">Information and public services for the Island of Jersey</div>
          <div className="text-[27px] leading-[40px] tracking-[0.026em]">L'înformâtion et les sèrvices publyis pouor I'Île dé Jèrri</div>
        </div>
        <nav className="ml-auto flex gap-[40px] pr-[47px] pt-[44px] text-[31px] leading-[42px] font-bold tracking-[0.03em]">
          <a className={LINK}>Contacts</a>
          <a className={LINK}>Translate</a>
          <a className={`mt-[2px] ${LINK}`}>Login</a>
        </nav>
      </header>

      <div className="flex h-[98px] shrink-0 justify-end border-b-[2.1px] border-[#808080] bg-[#edefee] pt-[10px] pr-[38px]">
        <label className="mr-[18px] pt-[14px] text-[40px] leading-[50px] tracking-[0.021em]">Search gov.je</label>
        <div className="h-[76px] w-[644px] border-[2.1px] border-r-0 border-[#909090] bg-white" />
        <button className="h-[76px] w-[172px] border-b-[6.1px] border-[#595959] bg-[#b5000f] pb-[1px] text-[35px] font-semibold tracking-[0.036em] text-white">Search</button>
      </div>

      <div className="flex h-[78px] shrink-0 items-center border-b-[2.1px] border-[#808080] bg-[#edefee] pl-[48px]">
        <div className="flex w-[32px] flex-col gap-[6px]">
          <i className="h-[5px] rounded-sm bg-[#1d1d1b]" />
          <i className="h-[5px] rounded-sm bg-[#1d1d1b]" />
          <i className="h-[5px] rounded-sm bg-[#1d1d1b]" />
        </div>
        <span className="ml-[16px] text-[35px] font-semibold tracking-[0.035em]">Menu</span>
      </div>

      <div className="flex h-[136px] shrink-0 items-baseline pt-[22px] pl-[48px]">
        <h1 className="text-[72px] leading-[96px] font-bold tracking-[0.018em]">Jersey weather</h1>
        <span className="ml-[17px] text-[35px]">Current</span>
        <span className="ml-[16px] text-[47px] font-bold tracking-[-0.006em]">9.2°C</span>
      </div>

      <section className="flex h-[408px] shrink-0 items-end gap-[26px] border-b-[10.1px] border-[#b5000f] bg-[#969696] pl-[48px]">
        <div className="relative -mb-[10px] flex h-[384px] w-[730px] border-x-[2.1px] border-t-[10.1px] border-x-[#808080] border-t-[#b5000f] bg-white">
          <div className="w-[478px] pt-[13px] pl-[34px]">
            <h2 className="text-[55px] leading-[64px] font-semibold tracking-[0.022em]">Today</h2>
            <div className="mt-[23px] flex h-[117px]">
              <WeatherIcon sun rain className="h-[117px] w-[198px]" />
              <span className="mt-[35px] ml-[110px] text-[42px] leading-[48px] font-bold tracking-[-0.015em]">19°C</span>
            </div>
            <div className="flex">
              <span className="mt-[47px] ml-[10px] w-[61px] text-[35px] leading-[48px]">UV</span>
              <span className="mt-[49px] h-[48px] w-[42px] bg-[#ff7f14] text-center text-[36px] leading-[48px] text-white">6</span>
              <div className="mt-[30px] ml-[61px] flex w-[80px] flex-col items-center text-[29px] leading-[32px] tracking-normal">
                70%
                <div className="mt-[17px]"><Drops /></div>
              </div>
              <Wind force="F4" angle={22} className="mt-[3px] ml-[44px] h-[140px] w-[140px]" font={31} />
            </div>
          </div>
          <div className="mt-[90px] h-[258px] border-l-[2.1px] border-[#1d1d1b] pt-[10px] pl-[22px] text-[35px] leading-[48px] tracking-[0.026em]">
            <p>Sunny a.m.</p>
            <p>Rain p.m.</p>
          </div>
        </div>
        {DAYS.map((d) => (
          <div key={d.day} className="mb-[2px] h-[324px] w-[304px] rounded-t-[10px] border-[2.1px] border-b-0 border-[#808080] bg-white pt-[19px] pl-[14px]">
            <h3 className="text-[39px] leading-[48px] font-semibold tracking-[0.008em] whitespace-nowrap">{d.day}</h3>
            <div className="mt-[14px] flex h-[100px]">
              <WeatherIcon sun rain={d.wet} className="h-[100px] w-[170px]" />
              <span className="mt-[31px] ml-[26px] text-[34px] leading-[40px] font-bold tracking-[-0.02em]">{d.temp}</span>
            </div>
            <div className="flex">
              <Wind force={d.wind} angle={d.angle} className="-mt-[5px] -ml-[8px] h-[140px] w-[140px] shrink-0" size={30} tip={49} font={28} />
              <div className="mt-[20px] ml-[38px] flex w-[80px] flex-col items-center text-[29px] leading-[32px] tracking-normal">
                {d.rain}
                <div className="mt-[16px]"><Drops /></div>
              </div>
            </div>
          </div>
        ))}
      </section>

      <section className="h-[656px] shrink-0 border-b-[10.1px] border-[#b5000f] pt-[24px]">
        <div className="flex h-[496px]">
          {PERIODS.map((p) => (
            <div key={p.name} className={`${p.pad} h-[496px] shrink-0 border-[#808080]`}>
              <div className="flex items-baseline leading-[48px] whitespace-nowrap">
                <h2 className="text-[42px] font-semibold tracking-[0.02em]">{p.name}</h2>
                <span className={`ml-[20px] text-[31px] text-[#b5000f] ${p.track}`}>{p.time}</span>
              </div>
              <div className="mt-[45px] grid h-[140px] w-[790px] grid-cols-4 justify-items-center">
                <WeatherIcon {...p.icon} className="mt-[13px] h-[111px]" />
                <div className="pt-[21px] text-center leading-[46px]">
                  <div className="text-[34px]">{p.label}</div>
                  <div className="text-[39px] font-bold tracking-[-0.005em]">{p.temp}</div>
                </div>
                <div className="flex flex-col items-center gap-[5px] pt-[21px] text-[33px] leading-[44px] tracking-normal">
                  {p.rain}
                  <Drops light={p.light} />
                </div>
                <Wind force={p.wind} angle={p.angle} className="h-[140px] w-[140px]" size={42} tip={69} font={35} />
              </div>
              <div className="mt-[18px] text-[35px] leading-[48px] tracking-[0.0105em] whitespace-nowrap">
                {p.text.map((t) => (
                  <p key={t}>{t}</p>
                ))}
              </div>
            </div>
          ))}
        </div>
        <div className="mt-[46px] flex justify-between pr-[39px] pl-[48px] leading-[48px]">
          <span className="text-[35px] tracking-[0.015em]">Forecast updated 13 June 2024 3:00 am</span>
          <span className="mt-[5px] flex items-center gap-[16px] text-[31px]">
            Settings <FaCog className="h-[32px] w-[32px]" />
          </span>
        </div>
      </section>

      <section className="grid h-[1788px] shrink-0 grid-cols-[800px_800px_800px] gap-x-[32px] pt-[27px] pl-[48px]">
        <div>
          <h3 className={`tracking-[0.022em] ${MEDIA_TITLE}`}>Weather radar</h3>
          <div className="mt-[27px] h-[612px]"><RadarMap /></div>
          <h3 className={`mt-[75px] tracking-[0.026em] ${MEDIA_TITLE}`}>Tide times St Helier</h3>
          <h4 className="mt-[37px] h-[86px] border-t-[2.1px] border-[#1d1d1b] text-[34px] leading-[46px] font-bold tracking-[0.036em] text-[#b5000f]">Thursday 13 June</h4>
          <TideRows
            col="w-[374px]"
            rows={[["Low water", "06:01", "3.5m", true], ["High water", "11:53", "8.3m"], ["Low water", "18:16", "3.9m"]]}
          />
          <h4 className="mt-[42px] h-[89px] border-b-[2.1px] border-[#1d1d1b] text-[34px] leading-[48px] font-bold tracking-[0.036em]">Friday 14 June</h4>
          <TideRows
            col="w-[366px]"
            rows={[["High water", "00:06", "8.4m"], ["Low water", "06:47", "3.8m"], ["High water", "12:47", "8m"], ["Low water", "19:08", "4.1m"]]}
          />
        </div>
        <div>
          <h3 className={`tracking-[0.036em] ${MEDIA_TITLE}`}>Satellite image</h3>
          <div className="mt-[27px] h-[612px]"><SatelliteMap /></div>
          <h3 className={`mt-[59px] tracking-[0.039em] ${MEDIA_TITLE}`}>Sea state Thursday morning</h3>
          <div className="mt-[29px]">
            <SeaMap id="coastD" lines={MORNING_LINES} labels={[["Moderate", 47, 187, 203], ["Slight", 357, 297, 120], ["Smooth", 492, 634, 164]]} />
          </div>
        </div>
        <div>
          <h3 className={`tracking-[0.037em] ${MEDIA_TITLE}`}>Wind and wave map</h3>
          <div className="mt-[27px] h-[612px]"><WindMap /></div>
          <h3 className={`mt-[59px] tracking-[0.039em] ${MEDIA_TITLE}`}>Sea state Thursday afternoon</h3>
          <div className="mt-[29px]">
            <SeaMap
              id="coastE"
              lines={AFTERNOON_LINES}
              labels={[["Moderate", 329, 176, 203], ["Rather", 82, 203, 144], ["rough", 82, 263, 124], ["Slight", 382, 556, 120]]}
            />
          </div>
        </div>
      </section>

      <section className="flex h-[148px] shrink-0 bg-[#595959] pt-[20px] pl-[48px] text-white">
        <h2 className="w-[220px] text-[44px] leading-[48px] font-bold tracking-[0.015em]">Our sites</h2>
        <div className="flex flex-col gap-[10px] text-[31px] tracking-[0.02em]">
          <SiteRow items={SITES_A} />
          <SiteRow items={SITES_B} />
        </div>
      </section>

      <footer className="h-[236px] shrink-0 bg-[#e0e0e0] pt-[33px] pl-[48px]">
        <div className="flex h-[64px] items-center">
          <h2 className="w-[521px] text-[44px] leading-[48px] font-bold tracking-[0.029em] whitespace-nowrap">Find us on social media</h2>
          <div className="flex gap-[40px] text-white">
            {[FaTwitter, FaLinkedinIn, FaFacebookF, FaInstagram, FaYoutube].map((Icon, i) => (
              <span key={i} className="flex size-[64px] items-center justify-center rounded-full bg-[#808080]">
                <Icon className={i === 4 ? "size-[40px]" : "size-[35px]"} />
              </span>
            ))}
          </div>
        </div>
        <div className="mt-[34px] flex justify-between pr-[48px] text-[31px] leading-[48px]">
          <div className="flex gap-[31px] tracking-[0.017em]">
            {["Terms and conditions", "Privacy", "Accessibility", "Customer feedback", "Sitemap"].map((t) => (
              <a key={t} className={LINK}>{t}</a>
            ))}
          </div>
          <span className="tracking-[0.008em]">© Government of Jersey 2010 - 2024</span>
        </div>
      </footer>

      <svg viewBox="2370 3918 190 190" className="absolute right-0 bottom-0 h-[190px] w-[190px]">
        <path d="M2420 4108L2560 3968V4108Z" fill="#fff" />
        <path d="M2380 4108L2560 3928V3975L2427 4108Z" fill="#2b3640" />
        <text transform="translate(2487 4036) rotate(-45)" textAnchor="middle" fontSize="28" fill="#fff" textLength="146" className="font-[Lato] font-bold">
          FEEDBACK
        </text>
        <Face x={2478} y={4083} color="#3aa876" mouth="M-8 4Q0 13 8 4" />
        <Face x={2507} y={4055} color="#f58233" mouth="M-7 6H7" />
        <Face x={2535} y={4026} color="#e0486c" mouth="M-7 9Q0 1 7 9" />
      </svg>
    </div>
  );
}
